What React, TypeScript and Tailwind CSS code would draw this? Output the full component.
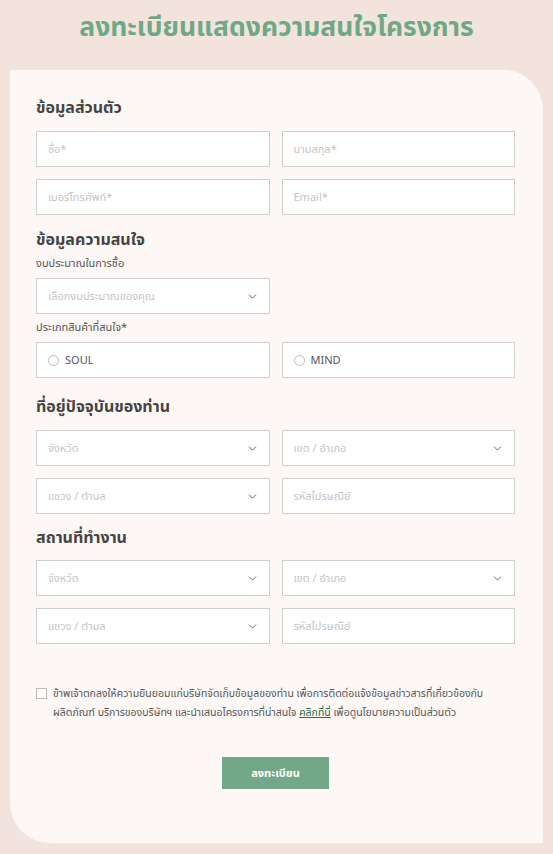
import { ChevronDown } from "lucide-react";

const FONT = { fontFamily: '"Noto Sans", "Noto Sans Thai", Tahoma, sans-serif' };

function TextField({ placeholder }: { placeholder: string }) {
  return (
    <div className="h-[36px] bg-white border border-[#cfcfcf] flex items-center px-[11px] text-[11px] text-[#c4c4c4]">
      {placeholder}
    </div>
  );
}

function SelectField({ placeholder }: { placeholder: string }) {
  return (
    <div className="h-[36px] bg-white border border-[#cfcfcf] flex items-center justify-between pl-[11px] pr-[10px] text-[11px] text-[#c4c4c4]">
      <span>{placeholder}</span>
      <ChevronDown size={13} strokeWidth={1.6} className="text-[#555]" />
    </div>
  );
}

function RadioField({ label }: { label: string }) {
  return (
    <div className="h-[36px] bg-white border border-[#cfcfcf] flex items-center gap-[6px] pl-[11px] text-[11px] text-[#555]">
      <span className="w-[11px] h-[11px] rounded-full border border-[#bbb] bg-white" />
      <span>{label}</span>
    </div>
  );
}

function Heading({ children, className }: { children: string; className: string }) {
  return (
    <h2 className={`text-[16px] leading-[22px] font-bold text-[#444] ${className}`}>{children}</h2>
  );
}

function AddressBlock() {
  return (
    <div className="grid grid-cols-2 gap-x-[12px] gap-y-[12px]">
      <SelectField placeholder="จังหวัด" />
      <SelectField placeholder="เขต / อำเภอ" />
      <SelectField placeholder="แขวง / ตำบล" />
      <TextField placeholder="รหัสไปรษณีย์" />
    </div>
  );
}

export default function App() {
  return (
    <div className="min-h-[854px] bg-[#f2e4dd] pb-[11px]" style={FONT}>
      <div className="h-[52px] flex items-center justify-center">
        <h1 className="text-[26.5px] font-bold text-[#6fa886] leading-none">ลงทะเบียนแสดงความสนใจโครงการ</h1>
      </div>

      <div className="mt-[18px] mx-[10px] bg-[#fdf8f5] rounded-tr-[40px] rounded-bl-[40px] pt-[26px] pb-[54px] pl-[26px] pr-[28px]">
        {/* Personal */}
        <Heading className="">ข้อมูลส่วนตัว</Heading>
        <div className="mt-[13px] grid grid-cols-2 gap-[12px]">
          <TextField placeholder="ชื่อ*" />
          <TextField placeholder="นามสกุล*" />
          <TextField placeholder="เบอร์โทรศัพท์*" />
          <TextField placeholder="Email*" />
        </div>

        {/* Interest */}
        <Heading className="mt-[13px]">ข้อมูลความสนใจ</Heading>
        <p className="mt-[5px] text-[11px] leading-[16px] text-[#555]">งบประมาณในการซื้อ</p>
        <div className="mt-[7px] grid grid-cols-2 gap-[12px]">
          <SelectField placeholder="เลือกงบประมาณของคุณ" />
        </div>
        <p className="mt-[5px] text-[11px] leading-[16px] text-[#555]">ประเภทสินค้าที่สนใจ*</p>
        <div className="mt-[7px] grid grid-cols-2 gap-[12px]">
          <RadioField label="SOUL" />
          <RadioField label="MIND" />
        </div>

        {/* Address */}
        <Heading className="mt-[17px]">ที่อยู่ปัจจุบันของท่าน</Heading>
        <div className="mt-[13px]">
          <AddressBlock />
        </div>

        {/* Work */}
        <Heading className="mt-[12px]">สถานที่ทำงาน</Heading>
        <div className="mt-[12px]">
          <AddressBlock />
        </div>

        {/* Consent */}
        <div className="mt-[40px] flex gap-[6px] text-[10.5px] leading-[19px] text-[#555]">
          <span className="mt-[4px] w-[11px] h-[11px] shrink-0 border border-[#bbb] bg-white" />
          <p>
            ข้าพเจ้าตกลงให้ความยินยอมแก่บริษัทจัดเก็บข้อมูลของท่าน เพื่อการติดต่อแจ้งข้อมูลข่าวสารที่เกี่ยวข้องกับ
            ผลิตภัณฑ์ บริการของบริษัทฯ และนำเสนอโครงการที่น่าสนใจ{" "}
            <span className="text-[#2d6b4b] underline">คลิกที่นี่</span> เพื่อดูนโยบายความเป็นส่วนตัว
          </p>
        </div>

        <div className="mt-[35px] flex justify-center">
          <button className="w-[107px] h-[32px] bg-[#72a887] text-white text-[11px] font-bold">ลงทะเบียน</button>
        </div>
      </div>
    </div>
  );
}
